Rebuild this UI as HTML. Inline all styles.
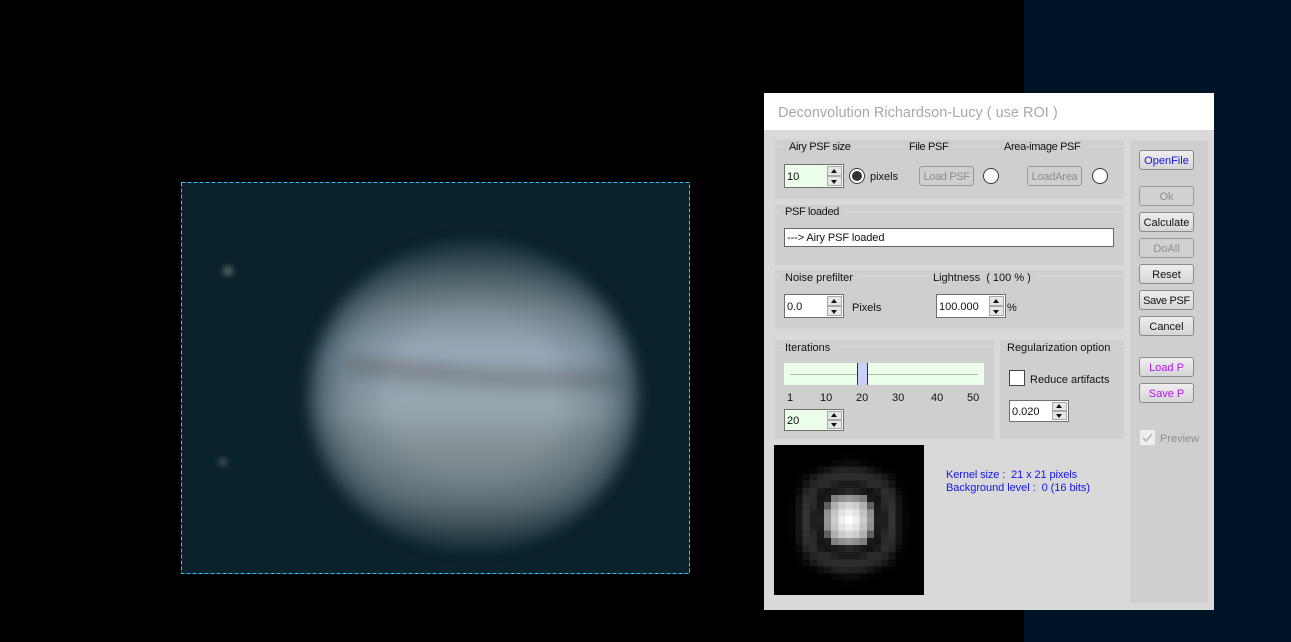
<!DOCTYPE html>
<html><head><meta charset="utf-8">
<style>
html,body{margin:0;padding:0;background:#000}
#r{position:relative;width:1291px;height:642px;overflow:hidden;background:#000;font-family:"Liberation Sans",sans-serif;font-size:11px;color:#111}
#r div{position:absolute;box-sizing:border-box}
.t{white-space:nowrap;line-height:13px}
.p{background:#cfcfcf;border-bottom:1px solid #d2d2d2}
.l{background:#d8d8d8;height:1px}
.lb{background:#cfcfcf;padding:0 4px 0 5px;white-space:nowrap;line-height:13px}
.n{letter-spacing:-.35px}
.s{border:1px solid #707070;background:#fff;padding:1px 0 0 2px;white-space:nowrap}
.g{background:#ebffeb}
.ub,.db{right:1px;width:15px;background:#e6e6e6;border:1px solid #aaa}
.ub i,.db i{position:absolute;left:3px;width:0;height:0;border-left:3.5px solid transparent;border-right:3.5px solid transparent}
.ub i{top:2px;border-bottom:4px solid #111}
.db i{top:3px;border-top:4px solid #111}
.rd{width:16px;height:16px;border-radius:50%;background:#fff;border:1.5px solid #3a3a3a}
.b{left:1139px;width:55px;height:20px;border:1px solid #8a8a8a;border-radius:3px;background:linear-gradient(#eeeeee,#d6d6d6);text-align:center;line-height:20px;white-space:nowrap}
.d{color:#8d8d8d;border-color:#999;background:#d1d1d1}
</style></head><body>
<div id="r">
<div style="left:1024px;top:0;width:267px;height:642px;background:#001428"></div>

<svg style="position:absolute;left:181px;top:182px" width="509" height="392" viewBox="181 182 509 392">
<defs>
<filter id="b1" x="-10%" y="-10%" width="120%" height="120%"><feGaussianBlur stdDeviation="7"/></filter>
<filter id="b2" x="-20%" y="-100%" width="140%" height="300%"><feGaussianBlur stdDeviation="4"/></filter>
<filter id="b3" x="-100%" y="-100%" width="300%" height="300%"><feGaussianBlur stdDeviation="3"/></filter>
<linearGradient id="pg" x1="0" y1="0" x2="0" y2="1">
<stop offset="0" stop-color="#33474d"/>
<stop offset=".08" stop-color="#4f6268"/>
<stop offset=".16" stop-color="#6a7c82"/>
<stop offset=".22" stop-color="#808f96"/>
<stop offset=".29" stop-color="#8c9dab"/>
<stop offset=".36" stop-color="#98a9ba"/>
<stop offset=".45" stop-color="#92a2ae"/>
<stop offset=".545" stop-color="#98a7ae"/>
<stop offset=".64" stop-color="#87949a"/>
<stop offset=".74" stop-color="#7a888e"/>
<stop offset=".83" stop-color="#6c7c82"/>
<stop offset=".93" stop-color="#4c5c60"/>
<stop offset="1" stop-color="#2c3f45"/>
</linearGradient>
<radialGradient id="lm" cx=".5" cy=".5" r=".5">
<stop offset=".5" stop-color="#0c2a36" stop-opacity="0"/>
<stop offset=".8" stop-color="#0c2a36" stop-opacity=".22"/>
<stop offset="1" stop-color="#0c2a36" stop-opacity=".7"/>
</radialGradient>
<clipPath id="pc"><ellipse cx="473.5" cy="396" rx="164" ry="154"/></clipPath>
</defs>
<rect x="181" y="182" width="509" height="392" fill="#0a222c"/>
<g filter="url(#b1)">
<ellipse cx="473.5" cy="396" rx="164" ry="154" fill="url(#pg)"/>
<g clip-path="url(#pc)">
<path d="M345 356C390 358 430 362 470 367C520 372 570 370 620 374L620 388C570 388 520 388 470 384C430 382 390 380 345 372Z" fill="#7a7f84" filter="url(#b2)" opacity=".85"/>
<path d="M400 445C450 446 520 447 590 449L590 456C520 456 450 454 400 451Z" fill="#878d8c" filter="url(#b2)" opacity=".5"/>
</g>
<ellipse cx="473.5" cy="396" rx="166" ry="156" fill="url(#lm)"/>
</g>
<circle cx="228" cy="271" r="5" fill="#56645f" filter="url(#b3)"/>
<circle cx="223" cy="462" r="4" fill="#48564f" filter="url(#b3)"/>
<rect x="181.5" y="182.5" width="508" height="391" fill="none" stroke="#3cbdf0" stroke-width="1" stroke-dasharray="4 2"/>
</svg>

<!-- dialog -->
<div style="left:764px;top:93px;width:450px;height:517px;background:#d9d9d9"></div>
<div style="left:764px;top:93px;width:450px;height:37px;background:#fff"></div>
<div class="t" style="left:778px;top:105px;font-size:14.5px;line-height:17px;color:#a8a8a8">Deconvolution Richardson-Lucy ( use ROI )</div>

<!-- group panels -->
<div class="p" style="left:775px;top:140px;width:349px;height:59px"></div>
<div class="l" style="left:775px;top:146px;width:349px"></div>
<div class="p" style="left:775px;top:205px;width:349px;height:60px"></div>
<div class="l" style="left:775px;top:211px;width:349px"></div>
<div class="p" style="left:775px;top:270px;width:349px;height:59px"></div>
<div class="l" style="left:775px;top:276px;width:349px"></div>
<div class="p" style="left:775px;top:340px;width:219px;height:99px"></div>
<div class="l" style="left:775px;top:346px;width:219px"></div>
<div class="p" style="left:1000px;top:340px;width:124px;height:99px"></div>
<div class="l" style="left:1000px;top:346px;width:124px"></div>
<div class="p" style="left:1130px;top:141px;width:78px;height:462px"></div>

<!-- group 1 -->
<div class="lb n" style="left:784px;top:141px">Airy PSF size</div>
<div class="lb n" style="left:904px;top:141px">File PSF</div>
<div class="lb n" style="left:999px;top:141px">Area-image PSF</div>
<div class="s g" style="left:784px;top:164px;width:60px;height:24px;line-height:22px">10
<div class="ub" style="top:1px;height:10px"><i></i></div><div class="db" style="top:11px;height:10px"><i></i></div></div>
<div class="rd" style="left:849px;top:168px"></div>
<div style="left:852px;top:171px;width:10px;height:10px;border-radius:50%;background:#333"></div>
<div class="t" style="left:870px;top:171px">pixels</div>
<div class="b d n" style="left:919px;top:166px;background:#cfcfcf">Load PSF</div>
<div class="rd" style="left:983px;top:168px"></div>
<div class="b d" style="left:1027px;top:166px;background:#cfcfcf;letter-spacing:-.2px">LoadArea</div>
<div class="rd" style="left:1092px;top:168px"></div>

<!-- group 2 -->
<div class="lb n" style="left:780px;top:206px">PSF loaded</div>
<div style="left:784px;top:228px;width:330px;height:19px;background:#fff;border:1px solid #666;line-height:19px;padding-left:2px;white-space:nowrap;letter-spacing:-.1px">---&gt; Airy PSF loaded</div>

<!-- group 3 -->
<div class="lb" style="left:780px;top:272px">Noise prefilter</div>
<div class="lb" style="left:928px;top:272px">Lightness&nbsp; ( 100 % )</div>
<div class="s" style="left:784px;top:294px;width:60px;height:24px;line-height:22px">0.0
<div class="ub" style="top:1px;height:10px"><i></i></div><div class="db" style="top:11px;height:10px"><i></i></div></div>
<div class="t" style="left:852px;top:302px">Pixels</div>
<div class="s" style="left:936px;top:294px;width:70px;height:24px;line-height:22px">100.000
<div class="ub" style="top:1px;height:10px"><i></i></div><div class="db" style="top:11px;height:10px"><i></i></div></div>
<div class="t" style="left:1007px;top:302px">%</div>

<!-- iterations -->
<div class="lb" style="left:780px;top:342px">Iterations</div>
<div style="left:784px;top:363px;width:200px;height:22px;background:#ebffeb"></div>
<div style="left:790px;top:374px;width:188px;height:1px;background:#b0b8b0"></div>
<div style="left:857px;top:363px;width:11px;height:22px;background:#cbcff8;border-left:1px solid #1a1ad0;border-right:1px solid #1a1ad0"></div>
<div class="t" style="left:787px;top:392px">1</div>
<div class="t" style="left:820px;top:392px">10</div>
<div class="t" style="left:856px;top:392px">20</div>
<div class="t" style="left:892px;top:392px">30</div>
<div class="t" style="left:931px;top:392px">40</div>
<div class="t" style="left:967px;top:392px">50</div>
<div class="s g" style="left:784px;top:409px;width:60px;height:22px;line-height:20px">20
<div class="ub" style="top:1px;height:9px"><i style="top:1px"></i></div><div class="db" style="top:10px;height:9px"><i style="top:2px"></i></div></div>

<!-- regularization -->
<div class="lb" style="left:1002px;top:342px">Regularization option</div>
<div style="left:1009px;top:370px;width:16px;height:16px;background:#fff;border:1px solid #444"></div>
<div class="t" style="left:1030px;top:374px">Reduce artifacts</div>
<div class="s" style="left:1009px;top:400px;width:60px;height:22px;line-height:20px">0.020
<div class="ub" style="top:1px;height:9px"><i style="top:1px"></i></div><div class="db" style="top:10px;height:9px"><i style="top:2px"></i></div></div>

<!-- kernel -->
<svg style="position:absolute;left:774px;top:445px" width="150" height="150" viewBox="0 0 21 21" shape-rendering="crispEdges">
<defs><g id="q">
<rect x="10" y="10" width="1" height="1" fill="#ffffff"/><rect x="11" y="10" width="1" height="1" fill="#f0f0f0"/><rect x="12" y="10" width="1" height="1" fill="#cccccc"/><rect x="13" y="10" width="1" height="1" fill="#959595"/><rect x="14" y="10" width="1" height="1" fill="#202020"/><rect x="15" y="10" width="1" height="1" fill="#1e1e1e"/><rect x="16" y="10" width="1" height="1" fill="#343434"/><rect x="17" y="10" width="1" height="1" fill="#161616"/><rect x="18" y="10" width="1" height="1" fill="#060606"/><rect x="19" y="10" width="1" height="1" fill="#010101"/>
<rect x="10" y="11" width="1" height="1" fill="#f0f0f0"/><rect x="11" y="11" width="1" height="1" fill="#e4e4e4"/><rect x="12" y="11" width="1" height="1" fill="#c4c4c4"/><rect x="13" y="11" width="1" height="1" fill="#909090"/><rect x="14" y="11" width="1" height="1" fill="#1c1c1c"/><rect x="15" y="11" width="1" height="1" fill="#202020"/><rect x="16" y="11" width="1" height="1" fill="#343434"/><rect x="17" y="11" width="1" height="1" fill="#141414"/><rect x="18" y="11" width="1" height="1" fill="#050505"/>
<rect x="10" y="12" width="1" height="1" fill="#d8d8d8"/><rect x="11" y="12" width="1" height="1" fill="#cccccc"/><rect x="12" y="12" width="1" height="1" fill="#b0b0b0"/><rect x="13" y="12" width="1" height="1" fill="#606060"/><rect x="14" y="12" width="1" height="1" fill="#181818"/><rect x="15" y="12" width="1" height="1" fill="#282828"/><rect x="16" y="12" width="1" height="1" fill="#303030"/><rect x="17" y="12" width="1" height="1" fill="#141414"/><rect x="18" y="12" width="1" height="1" fill="#040404"/>
<rect x="10" y="13" width="1" height="1" fill="#989898"/><rect x="11" y="13" width="1" height="1" fill="#909090"/><rect x="12" y="13" width="1" height="1" fill="#808080"/><rect x="13" y="13" width="1" height="1" fill="#1a1a1a"/><rect x="14" y="13" width="1" height="1" fill="#141414"/><rect x="15" y="13" width="1" height="1" fill="#2a2a2a"/><rect x="16" y="13" width="1" height="1" fill="#2c2c2c"/><rect x="17" y="13" width="1" height="1" fill="#121212"/><rect x="18" y="13" width="1" height="1" fill="#030303"/>
<rect x="10" y="14" width="1" height="1" fill="#2a2a2a"/><rect x="11" y="14" width="1" height="1" fill="#222222"/><rect x="12" y="14" width="1" height="1" fill="#1a1a1a"/><rect x="13" y="14" width="1" height="1" fill="#141414"/><rect x="14" y="14" width="1" height="1" fill="#1c1c1c"/><rect x="15" y="14" width="1" height="1" fill="#2c2c2c"/><rect x="16" y="14" width="1" height="1" fill="#242424"/><rect x="17" y="14" width="1" height="1" fill="#0a0a0a"/><rect x="18" y="14" width="1" height="1" fill="#010101"/>
<rect x="10" y="15" width="1" height="1" fill="#1a1a1a"/><rect x="11" y="15" width="1" height="1" fill="#1a1a1a"/><rect x="12" y="15" width="1" height="1" fill="#202020"/><rect x="13" y="15" width="1" height="1" fill="#2a2a2a"/><rect x="14" y="15" width="1" height="1" fill="#2c2c2c"/><rect x="15" y="15" width="1" height="1" fill="#242424"/><rect x="16" y="15" width="1" height="1" fill="#141414"/><rect x="17" y="15" width="1" height="1" fill="#040404"/>
<rect x="10" y="16" width="1" height="1" fill="#2c2c2c"/><rect x="11" y="16" width="1" height="1" fill="#2c2c2c"/><rect x="12" y="16" width="1" height="1" fill="#2c2c2c"/><rect x="13" y="16" width="1" height="1" fill="#2a2a2a"/><rect x="14" y="16" width="1" height="1" fill="#242424"/><rect x="15" y="16" width="1" height="1" fill="#181818"/><rect x="16" y="16" width="1" height="1" fill="#0a0a0a"/><rect x="17" y="16" width="1" height="1" fill="#020202"/>
<rect x="10" y="17" width="1" height="1" fill="#222222"/><rect x="11" y="17" width="1" height="1" fill="#222222"/><rect x="12" y="17" width="1" height="1" fill="#1e1e1e"/><rect x="13" y="17" width="1" height="1" fill="#141414"/><rect x="14" y="17" width="1" height="1" fill="#0c0c0c"/><rect x="15" y="17" width="1" height="1" fill="#040404"/><rect x="16" y="17" width="1" height="1" fill="#010101"/>
<rect x="10" y="18" width="1" height="1" fill="#0c0c0c"/><rect x="11" y="18" width="1" height="1" fill="#0a0a0a"/><rect x="12" y="18" width="1" height="1" fill="#060606"/><rect x="13" y="18" width="1" height="1" fill="#020202"/><rect x="14" y="18" width="1" height="1" fill="#010101"/>
<rect x="10" y="19" width="1" height="1" fill="#020202"/><rect x="11" y="19" width="1" height="1" fill="#010101"/>
</g></defs>
<rect width="21" height="21" fill="#000"/>
<use href="#q"/>
<use href="#q" transform="matrix(-1 0 0 1 21 0)"/>
<use href="#q" transform="matrix(1 0 0 -1 0 21)"/>
<use href="#q" transform="matrix(-1 0 0 -1 21 21)"/>
</svg>
<div class="t" style="left:946px;top:469px;color:#1414f0;letter-spacing:-.1px">Kernel size :&nbsp; 21 x 21 pixels</div>
<div class="t" style="left:946px;top:482px;color:#1414f0;letter-spacing:-.05px">Background level :&nbsp; 0 (16 bits)</div>

<!-- right buttons -->
<div class="b" style="top:150px;color:#1414e0">OpenFile</div>
<div class="b d" style="top:186px">Ok</div>
<div class="b" style="top:212px">Calculate</div>
<div class="b d" style="top:238px">DoAll</div>
<div class="b" style="top:264px">Reset</div>
<div class="b n" style="top:290px">Save PSF</div>
<div class="b" style="top:316px">Cancel</div>
<div class="b" style="top:357px;color:#b414f0">Load P</div>
<div class="b" style="top:383px;color:#b414f0">Save P</div>
<svg style="position:absolute;left:1140px;top:430px" width="15" height="15" viewBox="0 0 15 15"><rect width="15" height="15" fill="#eee"/><path d="M3 8l3 3 6-7" fill="none" stroke="#b5b5b5" stroke-width="1.6"/></svg>
<div class="t" style="left:1160px;top:433px;color:#8d8d8d">Preview</div>
</div>
</body></html>
